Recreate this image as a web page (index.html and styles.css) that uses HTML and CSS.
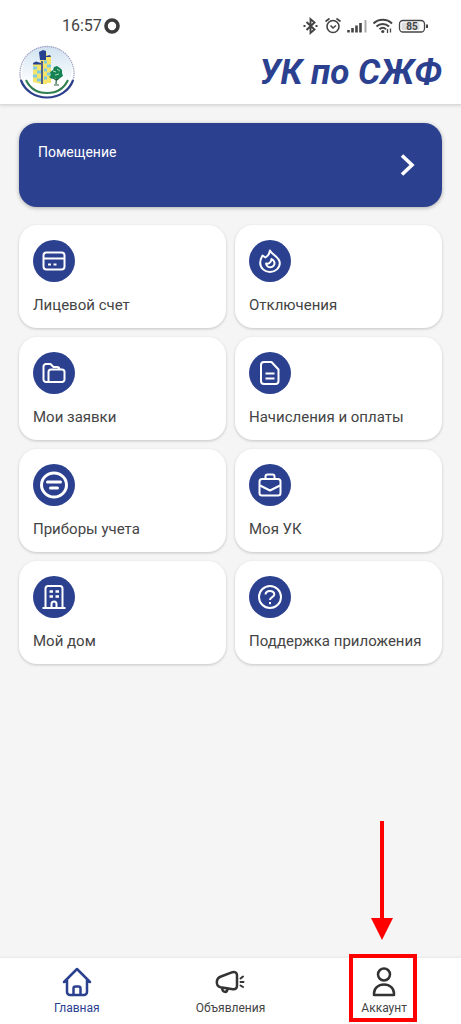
FILE: index.html
```html
<!DOCTYPE html>
<html lang="ru">
<head>
<meta charset="utf-8">
<meta name="viewport" content="width=device-width, initial-scale=1">
<title>УК по СЖФ</title>
<link rel="stylesheet" href="styles.css">
</head>
<body>
<div class="app">
  <header class="header">
    <div class="status">
      <div class="status-time">
        <span>16:57</span>
        <svg width="16" height="16" viewBox="0 0 16 16" fill="none" stroke="#3b3b3b" stroke-width="3.600"><circle cx="8" cy="8" r="6"/></svg>
      </div>
      <svg class="status-icons" width="126" height="20" viewBox="0 0 126 20" fill="none" stroke="#444" stroke-width="1.600">
        <path d="M3.500 6l8 7.500-4 3.500V3l4 3.500L3.500 14" stroke-width="1.900"/>
        <path d="M.5 10h2M12.500 10h2" stroke-width="2"/>
        <circle cx="30" cy="10.500" r="6"/>
        <path d="M22.500 5.500l4-3M37.500 5.500l-4-3M27.500 9.500l2.500 2.500 3-2.500"/>
        <path d="M45.500 14v2.500M49.500 12v4.500M53.500 9.500v7M57.500 7v9.500" stroke-width="2.600"/>
        <path d="M62.500 4v12.500" stroke="#aaa" stroke-width="2"/>
        <path d="M70.500 7.500c5-5 13.500-5 18.500 0M73.500 10.500c3.500-3.500 9-3.500 12.500 0M76.500 13.200c2-1.800 4.500-1.800 6.500 0" stroke-width="2"/>
        <circle cx="79.800" cy="15.500" r="1.600" fill="#444" stroke="none"/>
        <path d="M84.500 13v4M87.500 12.500v4" stroke-width="1.300"/>
        <rect x="96.500" y="4.500" width="25" height="11.500" rx="3.500" stroke-width="1.300"/>
        <rect x="98.500" y="6.500" width="18" height="7.500" rx="1.500" fill="#ddd" stroke="none"/>
        <path d="M124 8.500v3.500" stroke-width="2"/>
        <text class="battery-text" x="109" y="14" text-anchor="middle">85</text>
      </svg>
    </div>
    <div class="brand">
      <svg class="logo" width="56" height="56" viewBox="0 0 56 56" fill="none">
        <defs><linearGradient id="sky" x1="0" y1="0" x2="0" y2="1"><stop offset="0" stop-color="#cfe2f0"/><stop offset=".75" stop-color="#fff"/></linearGradient></defs>
        <circle cx="28" cy="28" r="25" fill="url(#sky)"/>
        <path d="M1.800 37a27 27 0 1 1 52.400 0" stroke="#a0a3c4" stroke-width="1.300" stroke-dasharray="1.400 .8"/>
        <path d="M1.800 37C6 48 16 54.500 28 54.500S50 48 54.200 37" stroke="#2b3f8c" stroke-width="2.200"/>
        <path d="M7 37c4 8.500 11.500 13 21 13s17-4.500 21-13" stroke="#2f7e50" stroke-width="2"/>
        <path d="M14 20h8v21l-8-2zM21 10h7v31h-7zM27 13h5v27h-5z" fill="#f6e46b"/>
        <path d="M20 9l4-2 3 1v9h-6zM14 20l3-1.500 5 1.500v1.500h-8zM27 13l4-1 1 2h-5z" fill="#26418f"/>
        <path d="M23 18v23" stroke="#26418f" stroke-width="1.600"/>
        <path d="M14 25h4M18 29h4M14 33h4M18 37h4M25 19h3M28 23h4M25 27h3M28 31h4M25 35h3" stroke="#81cbe0" stroke-width="3"/>
        <path d="M37 41l.6-7M37 37l-4-3M38 37l4-4M35 42h5" stroke="#245c3c" stroke-width="1.200"/>
        <path d="M31 29l3-2 1-3 3-1 3 2 2 2v3l1 3-3 2-3 1-3-1-2 1-3-2 2-2z" fill="#168354"/>
        <path d="M34 28l3 1M38 26l3 2M36 32l4-1" stroke="#a7d6bd"/>
      </svg>
      <h1 class="title">УК по СЖФ</h1>
    </div>
  </header>

  <main class="main">
    <button class="room" type="button">
      <span class="room-label">Помещение</span>
      <svg class="room-arrow" width="16" height="24" viewBox="0 0 16 24" fill="none" stroke="#fff" stroke-width="3.600"><path d="M3 2.500L13 12l-10 9.500"/></svg>
    </button>

    <div class="tiles">
      <a class="tile" href="#account"><span class="tile-icon"><svg viewBox="0 0 24 24"><rect x="1.500" y="3.500" width="21" height="17" rx="3"/><path d="M1.500 9.500h21M6 15.500h3M11.500 15.500h3"/></svg></span><span class="tile-label">Лицевой счет</span></a>
      <a class="tile" href="#outages"><span class="tile-icon"><svg viewBox="0 0 24 24"><path d="M12 1.500c1 3.500 9.800 6.500 9.800 12.500a9.800 9 0 0 1-19.600 0c0-3 .8-5 2.300-7.500l3 2c2.500-1.500 4-4 4.500-7z"/><path d="M13.500 10c2.500 1.500 3 2.500 3 4a4.200 4 0 0 1-8.400.5c1.700.5 4.900.3 5.400-4.500z"/></svg></span><span class="tile-label">Отключения</span></a>
      <a class="tile" href="#requests"><span class="tile-icon"><svg viewBox="0 0 24 24"><path d="M6.500 21H4a2.500 2.500 0 0 1-2.500-2.500v-13A2.500 2.500 0 0 1 4 3h4.500l3 3H15a2.500 2.500 0 0 1 2.500 2.500"/><path d="M6.500 18.500V11A2.500 2.500 0 0 1 9 8.500h11a2.500 2.500 0 0 1 2.500 2.500v7.500A2.500 2.500 0 0 1 20 21H6.500z"/></svg></span><span class="tile-label">Мои заявки</span></a>
      <a class="tile" href="#payments"><span class="tile-icon"><svg viewBox="0 0 24 24"><path d="M6 1h7.500l7 7.500V20a3 3 0 0 1-3 3H6a3 3 0 0 1-3-3V4a3 3 0 0 1 3-3zM7.500 12.500h9M7.500 17.500h9"/></svg></span><span class="tile-label">Начисления и оплаты</span></a>
      <a class="tile" href="#meters"><span class="tile-icon"><svg class="icon-meter" viewBox="0 0 28 28"><ellipse cx="14" cy="14" rx="12.500" ry="12"/><path d="M7.500 11h13M10.500 17h7"/></svg></span><span class="tile-label">Приборы учета</span></a>
      <a class="tile" href="#company"><span class="tile-icon"><svg viewBox="0 0 24 24"><rect x="1.500" y="6" width="21" height="16.500" rx="2.500"/><path d="M7.500 6V3.500A2 2 0 0 1 9.500 1.500h5a2 2 0 0 1 2 2V6M2 12.500l10 5 10-5"/></svg></span><span class="tile-label">Моя УК</span></a>
      <a class="tile" href="#house"><span class="tile-icon"><svg viewBox="0 0 24 24"><path d="M.5 23h23M3.500 23V3.500A2.500 2.500 0 0 1 6 1h12a2.500 2.500 0 0 1 2.500 2.500V23M9.500 23v-4a2.500 2.500 0 0 1 5 0v4"/><path d="M7.500 6.500h3.500M13.500 6.500h3.500M7.500 11.500h3.500M13.500 11.500h3.500" stroke-width="2.600"/></svg></span><span class="tile-label">Мой дом</span></a>
      <a class="tile" href="#support"><span class="tile-icon"><svg viewBox="0 0 24 24"><circle cx="12" cy="12" r="11"/><path d="M7.500 9.500c.3-5 9-4.500 8.800 0-.1 2.700-4.300 2.500-4.300 5.500M12 17v2.200"/></svg></span><span class="tile-label">Поддержка приложения</span></a>
    </div>
  </main>

  <nav class="nav">
    <a class="nav-item nav-item-active" href="#home">
      <svg width="30" height="30" viewBox="0 0 30 30"><path d="M2 15L15 2l13 13M5 12.500v12.500a3 3 0 0 0 3 3h14a3 3 0 0 0 3-3V12.500M11.500 28v-6.500a2 2 0 0 1 2-2h3a2 2 0 0 1 2 2V28"/></svg>
      <span>Главная</span>
    </a>
    <a class="nav-item" href="#news">
      <svg width="30" height="30" viewBox="0 0 30 30"><path d="M6 9.500L17.500 5.200c2.500-.8 4.500.8 4.500 3v10.500c0 2.500-1.500 3.800-4 3.500L5.500 20.200C.5 19 .5 11.500 6 9.500zM7 21c.5 5 5 5 5.500 1"/><path d="M25.500 11.500l2.500-2M25.500 15h3M25.500 18.500l2.500 1.500" stroke-width="2"/></svg>
      <span>Объявления</span>
    </a>
    <a class="nav-item" href="#profile">
      <svg width="30" height="30" viewBox="0 0 30 30"><circle cx="15" cy="7.500" r="6"/><path d="M5 28v-1.500c0-5 4-9 10-9s10 4 10 9V28z"/></svg>
      <span>Аккаунт</span>
      <span class="highlight"></span>
      <svg class="pointer" width="22" height="119" viewBox="0 0 22 119"><path d="M9 0h4v97h9l-11 22L0 97h9z"/></svg>
    </a>
  </nav>
</div>
</body>
</html>
```
FILE: styles.css
```css
* { box-sizing: border-box; }

body {
  margin: 0;
  background: #f5f5f5;
  color: #444;
  font-family: Roboto, "Noto Sans", sans-serif;
}

a { color: inherit; text-decoration: none; }

.app {
  display: flex;
  flex-direction: column;
  min-height: 100vh;
}

.header {
  padding: 16px 19px 5px;
  background: #fff;
  border-bottom: 1px solid #dadada;
  box-shadow: 0 1px 3px rgba(0, 0, 0, .12);
}

.status {
  display: flex;
  align-items: center;
  justify-content: space-between;
  height: 20px;
  margin-bottom: 7px;
  padding: 0 13px 0 43px;
}

.status-time {
  display: flex;
  align-items: center;
  gap: 2px;
  font-size: 16px;
  line-height: 20px;
}

.battery-text {
  fill: #444;
  stroke: none;
  font-size: 10px;
  font-weight: 700;
}

.brand {
  display: flex;
  align-items: center;
  justify-content: space-between;
}

.title {
  margin: 0;
  padding-top: 4px;
  color: #2b4190;
  font-size: 35px;
  font-style: italic;
  font-weight: 700;
  line-height: 40px;
}

.main {
  flex: 1;
  padding: 18px 19px 24px;
}

.room {
  display: flex;
  align-items: center;
  justify-content: space-between;
  width: 100%;
  min-height: 84px;
  padding: 19px 27px 19px 19px;
  border: 0;
  border-radius: 18px;
  background: #2b4190;
  box-shadow: 0 1px 4px rgba(0, 0, 0, .3);
  color: #fff;
  font: inherit;
}

.room-label {
  align-self: flex-start;
  font-size: 14px;
  line-height: 20px;
}

.tiles {
  display: grid;
  grid-template-columns: repeat(2, minmax(0, 1fr));
  gap: 9px;
  margin-top: 18px;
}

.tile {
  display: flex;
  flex-direction: column;
  gap: 13px;
  padding: 15px 14px 13px;
  border-radius: 18px;
  background: #fff;
  box-shadow: 0 1px 3px rgba(0, 0, 0, .2);
}

.tile-icon {
  display: grid;
  place-items: center;
  width: 42px;
  height: 42px;
  border-radius: 50%;
  background: #2b4190;
}

.tile-icon svg {
  width: 24px;
  height: 24px;
  fill: none;
  stroke: #fff;
  stroke-width: 2;
  stroke-linejoin: round;
}

.tile-icon .icon-meter {
  width: 28px;
  height: 28px;
  stroke-width: 3;
  stroke-linecap: round;
}

.tile-label {
  font-size: 15px;
  line-height: 20px;
}

.nav {
  display: grid;
  grid-template-columns: repeat(3, 1fr);
  background: #fff;
  box-shadow: 0 -1px 2px rgba(0, 0, 0, .06);
}

.nav-item {
  position: relative;
  display: flex;
  flex-direction: column;
  align-items: center;
  gap: 3px;
  padding: 9px 0 8px;
  font-size: 12px;
  line-height: 16px;
}

.nav-item svg {
  fill: none;
  stroke: #333;
  stroke-width: 2.5;
  stroke-linecap: round;
  stroke-linejoin: round;
}

.nav-item-active { color: #2b4190; }
.nav-item-active svg { stroke: #2b4190; }

.highlight {
  position: absolute;
  top: -4px;
  bottom: 2px;
  left: calc(50% - 35px);
  width: 68px;
  border: 4px solid #f00;
}

.nav-item .pointer {
  position: absolute;
  bottom: 84px;
  left: calc(50% - 13px);
  fill: #f00;
  stroke: none;
}
```
